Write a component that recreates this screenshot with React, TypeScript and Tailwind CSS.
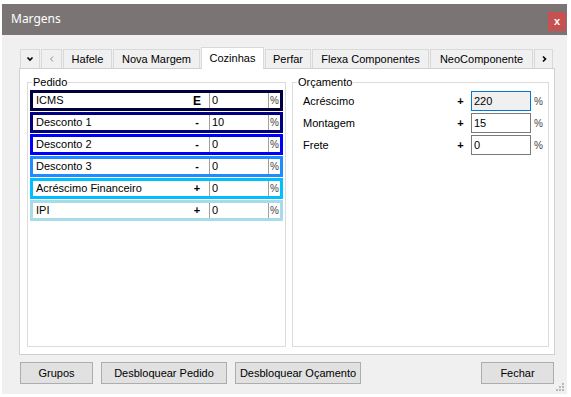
import React from 'react';

type PedidoRow = { label: string; sign: string; value: string; border: string };

const PEDIDO: PedidoRow[] = [
  { label: 'ICMS', sign: 'E', value: '0', border: 'border-[#000040]' },
  { label: 'Desconto 1', sign: '-', value: '10', border: 'border-[#000080]' },
  { label: 'Desconto 2', sign: '-', value: '0', border: 'border-[#0000ff]' },
  { label: 'Desconto 3', sign: '-', value: '0', border: 'border-[#1e8cff]' },
  { label: 'Acréscimo Financeiro', sign: '+', value: '0', border: 'border-[#00bfff]' },
  { label: 'IPI', sign: '+', value: '0', border: 'border-[#a8dbe8]' },
];

const ORCAMENTO = [
  { label: 'Acréscimo', value: '220', focused: true },
  { label: 'Montagem', value: '15', focused: false },
  { label: 'Frete', value: '0', focused: false },
];

const TABS = [
  { label: 'Hafele', w: 'w-[49px]' },
  { label: 'Nova Margem', w: 'w-[87px]' },
  { label: 'Cozinhas', w: 'w-[63px]', active: true },
  { label: 'Perfar', w: 'w-[46px]' },
  { label: 'Flexa Componentes', w: 'w-[117px]' },
  { label: 'NeoComponente', w: 'w-[103px]' },
];

const font = { fontFamily: '"Liberation Sans", Arial, sans-serif' };

function Chevron({ dir, bold }: { dir: 'down' | 'left' | 'right'; bold?: boolean }) {
  const d =
    dir === 'down' ? 'M1.5 2.5 L4 5 L6.5 2.5' : dir === 'left' ? 'M5 1.5 L2.5 4 L5 6.5' : 'M3 1.5 L5.5 4 L3 6.5';
  return (
    <svg width="8" height="8" viewBox="0 0 8 8">
      <path d={d} fill="none" stroke={bold ? '#000' : '#8a8a8a'} strokeWidth={bold ? 1.6 : 1} />
    </svg>
  );
}

function GroupBox({ title, className, children }: { title: string; className: string; children: React.ReactNode }) {
  return (
    <fieldset className={`border border-[#dcdcdc] ${className}`}>
      <legend className="ml-[4px] px-[1px] text-[11px] leading-[13px] text-black">{title}</legend>
      {children}
    </fieldset>
  );
}

export default function App() {
  return (
    <div className="w-[571px] h-[397px] bg-white pt-[4px] pl-[2px] overflow-hidden" style={font}>
      <div className="relative w-[565px] h-[390px] bg-[#f0f0f0] flex flex-col">
        {/* title bar */}
        <div className="h-[31px] bg-[#7a7574] flex items-start">
          <span
            className="pl-[9px] pt-[7px] text-[12px] leading-[16px] text-white"
            style={{ fontFamily: '"Noto Sans", "Open Sans", sans-serif' }}
          >
            Margens
          </span>
          <div className="ml-auto mr-[1px] mt-[8px] w-[18px] h-[19px] bg-[#c75050] flex items-center justify-center text-white text-[11px] font-bold leading-none">
            x
          </div>
        </div>

        {/* tab strip */}
        <div className="ml-[17px] mt-[12px] h-[21px] flex items-end gap-[1px] pl-[1px]">
          <div className="w-[20px] h-[19px] border border-b-0 border-[#d9d9d9] bg-[#f0f0f0] flex items-center justify-center">
            <Chevron dir="down" bold />
          </div>
          <div className="w-[21px] h-[19px] border border-b-0 border-[#d9d9d9] bg-[#f0f0f0] flex items-center justify-center">
            <Chevron dir="left" />
          </div>
          {TABS.map((t) =>
            t.active ? (
              <div
                key={t.label}
                className={`${t.w} h-[22px] -mb-px relative z-10 border border-b-0 border-[#d9d9d9] bg-white flex items-center justify-center text-[11px] text-black`}
              >
                {t.label}
              </div>
            ) : (
              <div
                key={t.label}
                className={`${t.w} h-[19px] border border-b-0 border-[#d9d9d9] bg-[#f0f0f0] flex items-center justify-center text-[11px] text-black`}
              >
                {t.label}
              </div>
            )
          )}
          <div className="w-[19px] h-[19px] border border-b-0 border-[#d9d9d9] bg-[#f0f0f0] flex items-center justify-center">
            <Chevron dir="right" bold />
          </div>
        </div>

        {/* tab page */}
        <div className="ml-[17px] w-[536px] h-[287px] border border-[#d0d0d0] bg-white flex gap-[6px] pt-[7px] pl-[7px] pb-[7px]">
          <GroupBox title="Pedido" className="w-[259px] h-[271px]">
            <div className="mt-[1px] px-[2px] flex flex-col gap-[1px]">
              {PEDIDO.map((r) => (
                <div key={r.label} className={`h-[21px] border-[3px] ${r.border} bg-white flex text-[11px] text-black`}>
                  <div className="w-[176px] flex items-center">
                    <span className="flex-1 pl-[3px]">{r.label}</span>
                    <span className={`w-[10px] mr-[7px] text-center ${r.sign === 'E' ? 'text-[12px] font-bold' : 'font-bold'}`}>
                      {r.sign}
                    </span>
                  </div>
                  <div className="w-[59px] border-l border-[#a0a0a0] pl-[2px] flex items-center">{r.value}</div>
                  <div className="w-[12px] border-l border-[#a0a0a0] flex items-center justify-center text-[10px] text-[#444]">
                    %
                  </div>
                </div>
              ))}
            </div>
          </GroupBox>

          <GroupBox title="Orçamento" className="w-[257px] h-[271px]">
            <div className="mt-[2px] flex flex-col gap-[2px]">
              {ORCAMENTO.map((r) => (
                <div key={r.label} className="h-[20px] flex items-center text-[11px] text-black">
                  <span className="w-[163px] pl-[10px]">{r.label}</span>
                  <span className="w-[9px] text-center font-bold">+</span>
                  <div
                    className={`ml-[6px] w-[60px] h-[20px] border pl-[2px] flex items-center ${
                      r.focused ? 'border-[#0078d7] bg-[#f0f0f0]' : 'border-[#7a7a7a] bg-white'
                    }`}
                  >
                    {r.value}
                  </div>
                  <span className="ml-[3px] text-[10px] text-[#444]">%</span>
                </div>
              ))}
            </div>
          </GroupBox>
        </div>

        {/* buttons */}
        <div className="mt-[7px] pl-[18px] flex text-[11px] text-black">
          <button className="w-[73px] h-[22px] border border-[#adadad] bg-[#e1e1e1]">Grupos</button>
          <button className="ml-[8px] w-[126px] h-[22px] border border-[#adadad] bg-[#e1e1e1]">Desbloquear Pedido</button>
          <button className="ml-[8px] w-[126px] h-[22px] border border-[#adadad] bg-[#e1e1e1]">Desbloquear Oçamento</button>
          <button className="ml-[120px] w-[73px] h-[22px] border border-[#adadad] bg-[#e1e1e1]">Fechar</button>
        </div>

        {/* size grip */}
        <svg className="absolute right-[2px] bottom-[2px]" width="10" height="10" viewBox="0 0 10 10">
          {[
            [8, 2],
            [8, 5],
            [5, 5],
            [8, 8],
            [5, 8],
            [2, 8],
          ].map(([x, y]) => (
            <rect key={`${x}-${y}`} x={x - 1} y={y - 1} width="2" height="2" fill="#b8b8b8" />
          ))}
        </svg>
      </div>
    </div>
  );
}
